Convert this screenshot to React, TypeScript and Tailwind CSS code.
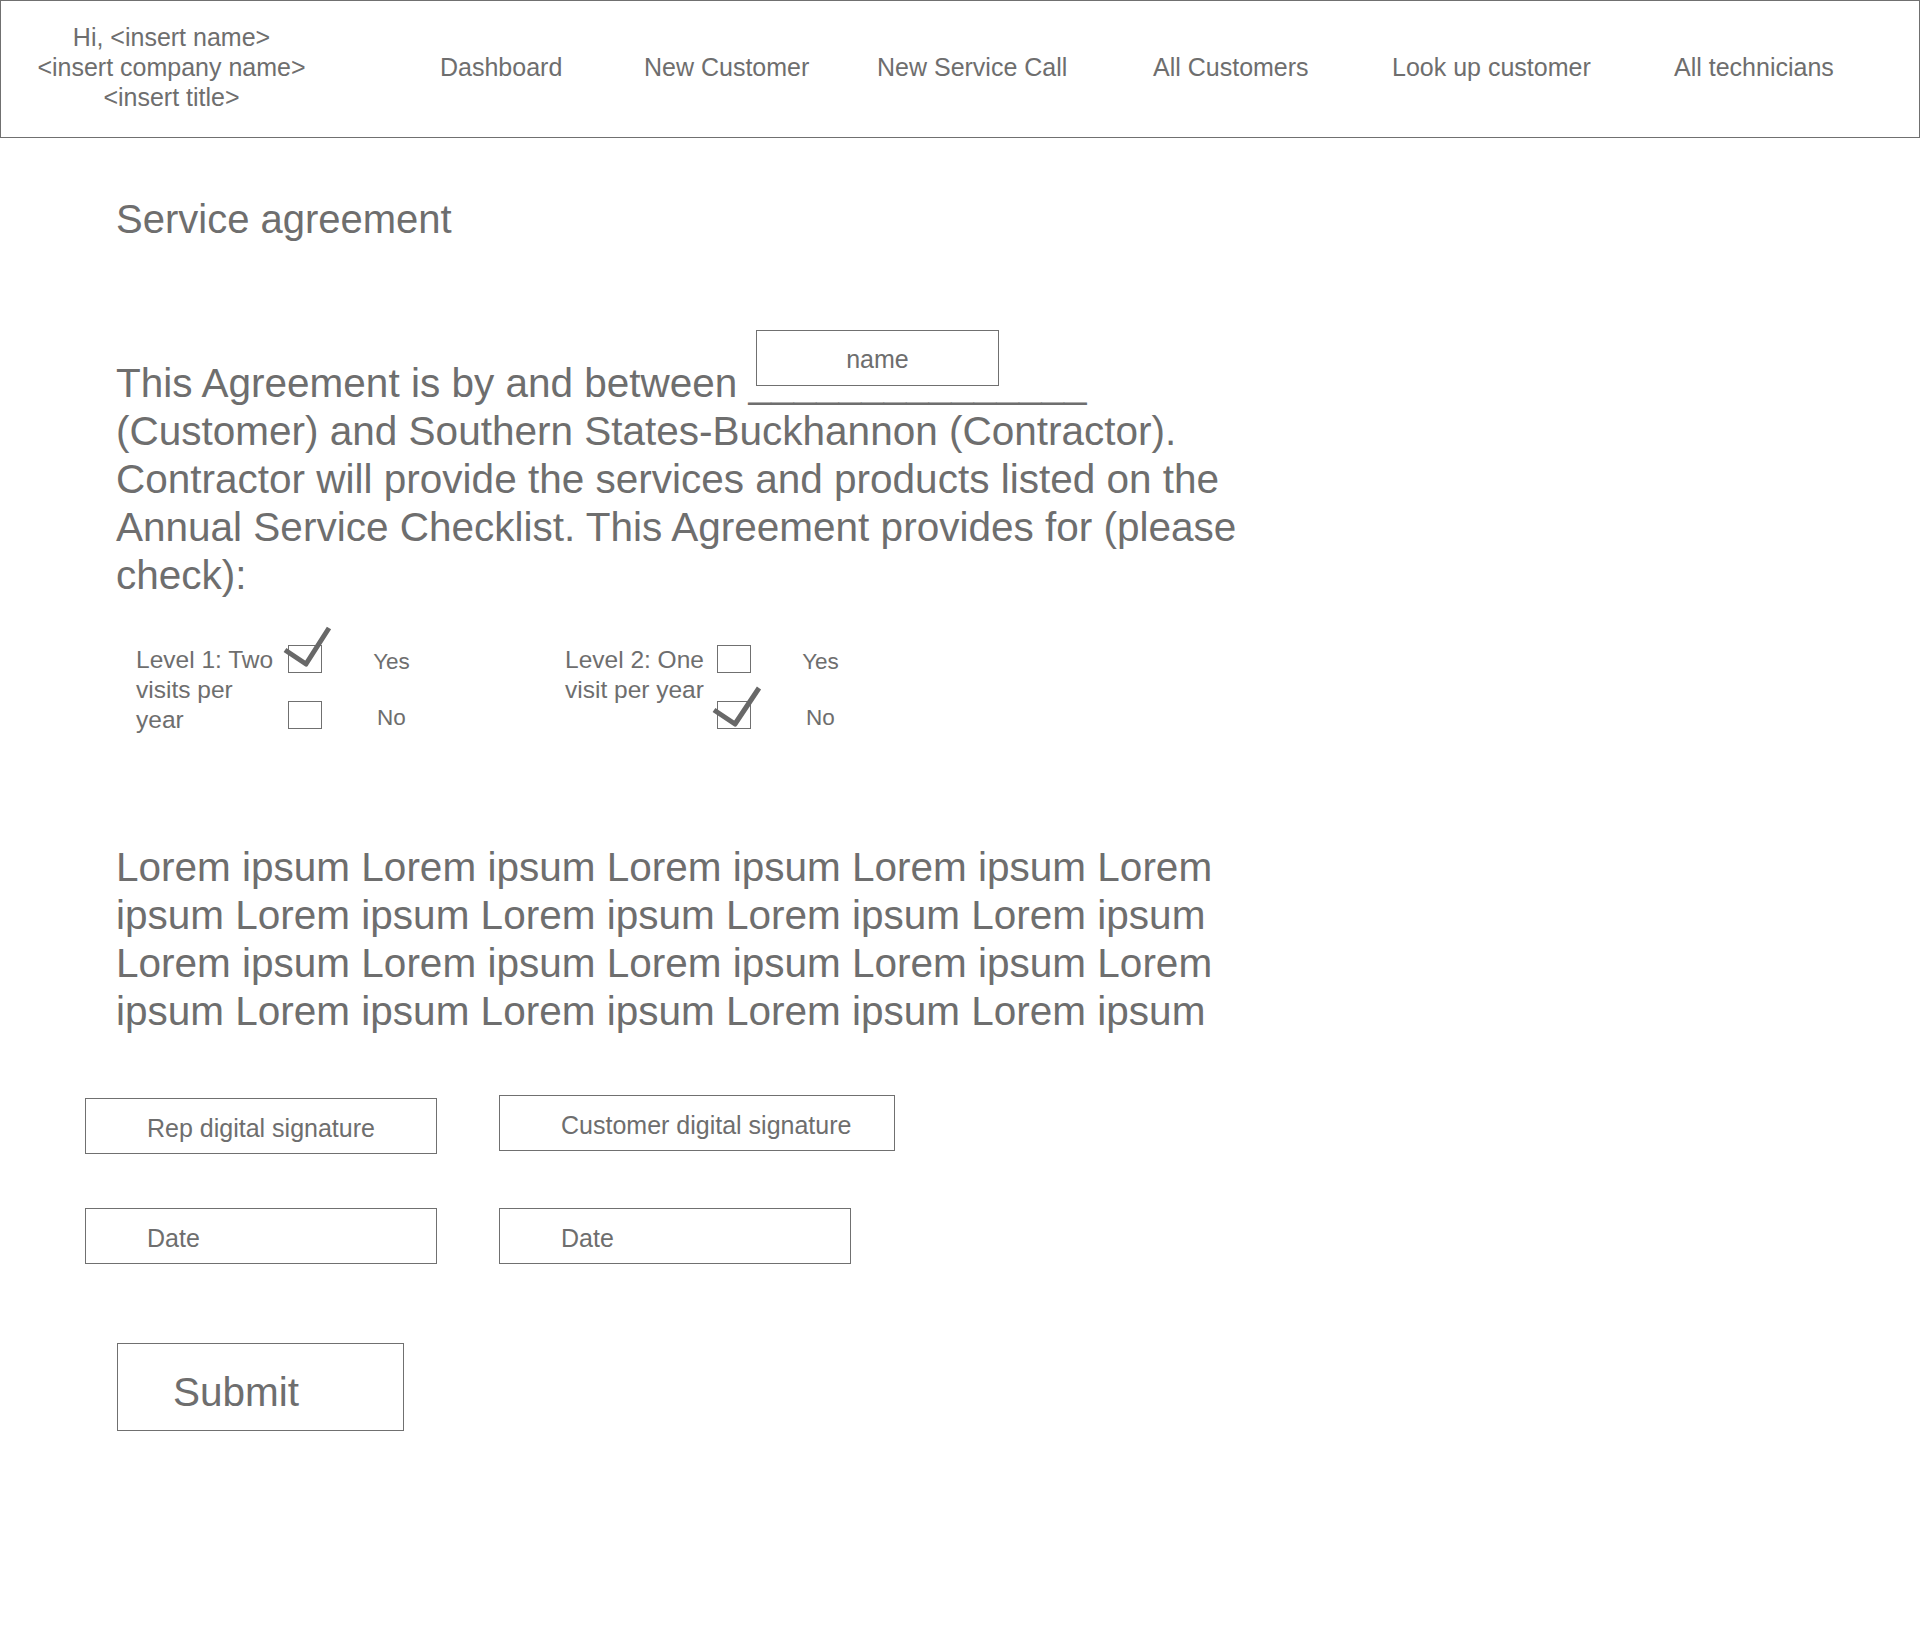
import React from "react";

const navItems = [
  "Dashboard",
  "New Customer",
  "New Service Call",
  "All Customers",
  "Look up customer",
  "All technicians",
];

function Check({ shift }: { shift: "yes" | "no" }) {
  // checkmark drawn over a box, sticking out above it
  const pts = shift === "yes" ? "6,29 27,43 50,7" : "6,33 27,47 51,11";
  return (
    <svg
      className="absolute left-[-10px] top-[-25px] overflow-visible"
      width="60"
      height="50"
      viewBox="0 0 60 50"
    >
      <polyline points={pts} fill="none" stroke="#686868" strokeWidth="5" strokeLinejoin="round" />
    </svg>
  );
}

function Box({ checked }: { checked?: "yes" | "no" }) {
  return (
    <div className="relative h-[28px] w-[34px] border border-[#707070]">
      {checked && <Check shift={checked} />}
    </div>
  );
}

function LevelGroup({ label, checked }: { label: React.ReactNode; checked: "yes" | "no" }) {
  return (
    <div className="flex items-start">
      <div className="w-[152px] text-[24.5px] leading-[30px]">{label}</div>
      <div className="flex flex-col gap-[28px]">
        <Box checked={checked === "yes" ? "yes" : undefined} />
        <Box checked={checked === "no" ? "no" : undefined} />
      </div>
      <div className="ml-[29.5px] mt-[3px] flex w-[80px] flex-col gap-[28px] text-center text-[22.5px]">
        <div className="h-[28px] leading-[28px]">Yes</div>
        <div className="h-[28px] leading-[28px]">No</div>
      </div>
    </div>
  );
}

function Field({ label, w, className = "" }: { label: string; w: string; className?: string }) {
  return (
    <div className={`flex h-[56px] items-center border border-[#707070] pl-[61px] pt-[5px] text-[25px] ${w} ${className}`}>
      {label}
    </div>
  );
}

export default function App() {
  return (
    <div className="min-h-[1648px] w-[1920px] bg-white font-['Liberation_Sans',Arial,sans-serif] text-[#6e6e6e]">
      <header className="flex h-[138px] items-start border border-[#707070] pt-[21px] text-[25px] leading-[30px]">
        <div className="w-[341px] text-center">
          <div>Hi, &lt;insert name&gt;</div>
          <div>&lt;insert company name&gt;</div>
          <div>&lt;insert title&gt;</div>
        </div>
        <nav className="ml-[98px] mt-[30px] grid grid-cols-[204px_233px_276px_239px_282px_auto]">
          {navItems.map((n) => (
            <span key={n} className="whitespace-nowrap">
              {n}
            </span>
          ))}
        </nav>
      </header>

      <main className="flex flex-col">
        <h1 className="ml-[116px] mt-[57px] text-[40px] leading-[48px]">Service agreement</h1>

        <div className="relative ml-[116px] mt-[116px] w-[1180px] text-[40.5px] leading-[48px]">
          <p>
            This Agreement is by and between _______________
            <br />
            (Customer) and Southern States-Buckhannon (Contractor).
            <br />
            Contractor will provide the services and products listed on the
            <br />
            Annual Service Checklist. This Agreement provides for (please
            <br />
            check):
          </p>
          <div className="absolute left-[640px] top-[-29px] flex h-[56px] w-[243px] items-center justify-center border border-[#707070] bg-white pt-[3px] text-[25px] leading-none">
            name
          </div>
        </div>

        <div className="ml-[136px] mt-[46px] flex items-start gap-[133.5px]">
          <LevelGroup
            checked="yes"
            label={
              <>
                Level 1: Two
                <br />
                visits per
                <br />
                year
              </>
            }
          />
          <LevelGroup
            checked="no"
            label={
              <>
                Level 2: One
                <br />
                visit per year
              </>
            }
          />
        </div>

        <p className="ml-[116px] mt-[108px] w-[1180px] text-[40.5px] leading-[48px]">
          Lorem ipsum Lorem ipsum Lorem ipsum Lorem ipsum Lorem
          <br />
          ipsum Lorem ipsum Lorem ipsum Lorem ipsum Lorem ipsum
          <br />
          Lorem ipsum Lorem ipsum Lorem ipsum Lorem ipsum Lorem
          <br />
          ipsum Lorem ipsum Lorem ipsum Lorem ipsum Lorem ipsum
        </p>

        <div className="ml-[85px] mt-[60px] flex items-start gap-[62px]">
          <Field label="Rep digital signature" w="w-[352px]" className="mt-[3px]" />
          <Field label="Customer digital signature" w="w-[396px]" />
        </div>

        <div className="ml-[85px] mt-[54px] flex items-start gap-[62px]">
          <Field label="Date" w="w-[352px]" />
          <Field label="Date" w="w-[352px]" />
        </div>

        <button className="ml-[117px] mt-[79px] h-[88px] w-[287px] border border-[#707070] pl-[55px] pt-[10px] text-left text-[40.5px] leading-[48px] text-[#6e6e6e]">
          Submit
        </button>
      </main>
    </div>
  );
}
